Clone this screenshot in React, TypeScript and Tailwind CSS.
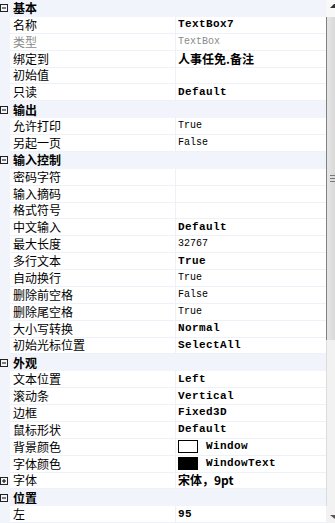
type Row =
  | { kind: "cat"; label: string }
  | {
      kind: "prop";
      label: string;
      value?: string;
      bold?: boolean;
      dim?: boolean;
      cjk?: boolean;
      swatch?: "white" | "black";
      expand?: boolean;
    };

const rows: Row[] = [
  { kind: "cat", label: "基本" },
  { kind: "prop", label: "名称", value: "TextBox7", bold: true },
  { kind: "prop", label: "类型", value: "TextBox", dim: true },
  { kind: "prop", label: "绑定到", value: "人事任免.备注", bold: true, cjk: true },
  { kind: "prop", label: "初始值" },
  { kind: "prop", label: "只读", value: "Default", bold: true },
  { kind: "cat", label: "输出" },
  { kind: "prop", label: "允许打印", value: "True" },
  { kind: "prop", label: "另起一页", value: "False" },
  { kind: "cat", label: "输入控制" },
  { kind: "prop", label: "密码字符" },
  { kind: "prop", label: "输入摘码" },
  { kind: "prop", label: "格式符号" },
  { kind: "prop", label: "中文输入", value: "Default", bold: true },
  { kind: "prop", label: "最大长度", value: "32767" },
  { kind: "prop", label: "多行文本", value: "True", bold: true },
  { kind: "prop", label: "自动换行", value: "True" },
  { kind: "prop", label: "删除前空格", value: "False" },
  { kind: "prop", label: "删除尾空格", value: "True" },
  { kind: "prop", label: "大小写转换", value: "Normal", bold: true },
  { kind: "prop", label: "初始光标位置", value: "SelectAll", bold: true },
  { kind: "cat", label: "外观" },
  { kind: "prop", label: "文本位置", value: "Left", bold: true },
  { kind: "prop", label: "滚动条", value: "Vertical", bold: true },
  { kind: "prop", label: "边框", value: "Fixed3D", bold: true },
  { kind: "prop", label: "鼠标形状", value: "Default", bold: true },
  { kind: "prop", label: "背景颜色", value: "Window", bold: true, swatch: "white" },
  { kind: "prop", label: "字体颜色", value: "WindowText", bold: true, swatch: "black" },
  { kind: "prop", label: "字体", value: "宋体，9pt", bold: true, cjk: true, expand: true },
  { kind: "cat", label: "位置" },
  { kind: "prop", label: "左", value: "95", bold: true },
];

const cjk = "font-['Noto_Sans_CJK_SC',sans-serif]";
const mono = "font-['Liberation_Mono','Noto_Sans_CJK_SC',monospace]";

// the little +/- box in the left gutter
function Toggle({ open }: { open: boolean }) {
  return (
    <svg width="8" height="8" viewBox="0 0 8 8">
      <rect x="0.5" y="0.5" width="7" height="7" fill="none" stroke="#222" />
      <line x1="2" y1="4" x2="6" y2="4" stroke="#000" />
      {!open && <line x1="4" y1="2" x2="4" y2="6" stroke="#000" />}
    </svg>
  );
}

function PropRow({ row }: { row: Row }) {
  if (row.kind === "cat") {
    return (
      <div className="flex h-[17px] items-center bg-[#f1f4fa]">
        <div className="flex w-[13px] shrink-0 items-center">
          <Toggle open />
        </div>
        <span className={`${cjk} text-[12px] font-bold leading-none text-black`}>{row.label}</span>
      </div>
    );
  }
  return (
    <div className="flex h-[17px]">
      <div className="flex w-[10px] shrink-0 items-center bg-[#f1f4fa]">
        {row.expand && <Toggle open={false} />}
      </div>
      <div className="flex w-[166px] shrink-0 items-center border-b border-r border-[#eef1f8] bg-white pl-[3px]">
        <span className={`${cjk} text-[12px] leading-none ${row.dim ? "text-[#8a8a8a]" : "text-black"}`}>
          {row.label}
        </span>
      </div>
      <div className="flex flex-1 items-center gap-[8px] border-b border-[#eef1f8] bg-white pl-[2px]">
        {row.swatch && (
          <span
            className={`h-[13px] w-[20px] border border-black ${row.swatch === "black" ? "bg-black" : "bg-white"}`}
          />
        )}
        {row.value && (
          <span
            className={`${row.cjk ? cjk : mono} leading-none whitespace-pre ${
              row.cjk
                ? "text-[12px] font-bold"
                : row.bold
                ? "text-[11px] font-bold tracking-[0.4px]"
                : "text-[10px]"
            } ${row.dim ? "text-[#8a8a8a]" : "text-black"}`}
          >
            {row.value}
          </span>
        )}
      </div>
    </div>
  );
}

function ScrollBar() {
  return (
    <div className="flex h-full w-[9px] shrink-0 flex-col bg-[#f2f2f2]">
      <div className="flex h-[17px] items-start justify-end bg-[#f8f8f8] pt-[4px]">
        <svg width="5" height="4" viewBox="0 0 5 4">
          <polygon points="4,0 5,0 5,4 0,4" fill="#333" />
        </svg>
      </div>
      <div className="flex h-[323px] flex-col items-end justify-center border-l border-[#808080] bg-gradient-to-r from-[#e6e6e6] to-[#d9d9d9]">
        <div className="flex flex-col gap-[2px]">
          <span className="h-px w-[5px] bg-[#777]" />
          <span className="h-px w-[5px] bg-[#777]" />
          <span className="h-px w-[5px] bg-[#777]" />
        </div>
      </div>
      <div className="flex-1 border-l border-[#dcdcdc]" />
      <div className="flex h-[17px] items-end justify-end pb-[4px]">
        <svg width="5" height="4" viewBox="0 0 5 4">
          <polygon points="0,0 5,0 5,4" fill="#555" />
        </svg>
      </div>
    </div>
  );
}

export default function App() {
  return (
    <div className="flex h-[523px] w-[335px] overflow-hidden bg-white">
      <div className="flex w-[326px] shrink-0 flex-col">
        {rows.map((r, i) => (
          <PropRow key={i} row={r} />
        ))}
      </div>
      <ScrollBar />
    </div>
  );
}
